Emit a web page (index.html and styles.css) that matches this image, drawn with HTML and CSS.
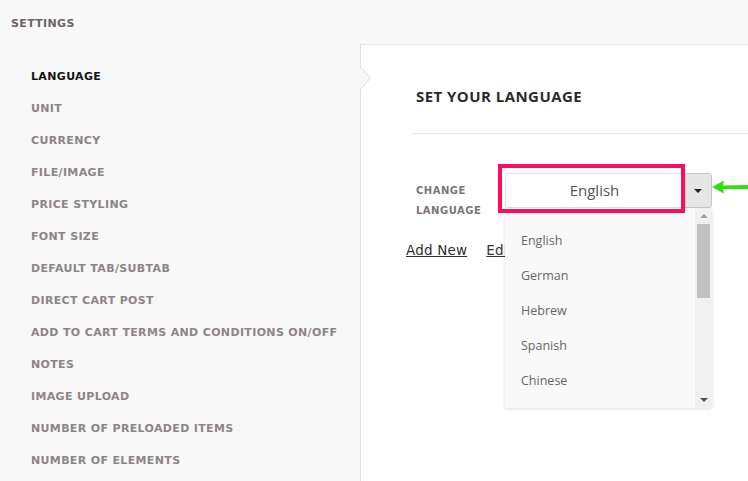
FILE: index.html
```html
<!DOCTYPE html>
<html>
<head>
<meta charset="utf-8">
<link rel="stylesheet" href="styles.css">
</head>
<body>
<div class="page">
  <header class="top"><span class="top-title">SETTINGS</span></header>
  <div class="main">
    <nav class="sidebar">
      <a class="nav-item active">LANGUAGE</a>
      <a class="nav-item">UNIT</a>
      <a class="nav-item">CURRENCY</a>
      <a class="nav-item">FILE/IMAGE</a>
      <a class="nav-item">PRICE STYLING</a>
      <a class="nav-item">FONT SIZE</a>
      <a class="nav-item">DEFAULT TAB/SUBTAB</a>
      <a class="nav-item">DIRECT CART POST</a>
      <a class="nav-item">ADD TO CART TERMS AND CONDITIONS ON/OFF</a>
      <a class="nav-item">NOTES</a>
      <a class="nav-item">IMAGE UPLOAD</a>
      <a class="nav-item">NUMBER OF PRELOADED ITEMS</a>
      <a class="nav-item">NUMBER OF ELEMENTS</a>
    </nav>
    <section class="panel">
      <svg class="notch" width="12" height="24" viewBox="0 0 12 24"><polygon points="0,0 10.5,11 0,22" fill="#f8f8f8"/><polyline points="0.5,0 10.5,11 0.5,22" fill="none" stroke="#dcdcdc" stroke-width="1"/></svg>
      <h2 class="panel-title">SET YOUR LANGUAGE</h2>
      <div class="divider"></div>
      <div class="form-row">
        <label class="field-label">CHANGE<br>LANGUAGE</label>
        <div class="select-wrap">
          <div class="select">
            <div class="select-value">English</div>
            <div class="select-btn"><span class="caret"></span></div>
          </div>
          <svg class="green-arrow" width="40" height="16" viewBox="0 0 40 16"><polygon points="0,7 12,0.5 11,5.5 40,5 40,9 11,9 12,13.5" fill="#2de10f"/></svg>
          <div class="dropdown">
            <ul class="options">
              <li>English</li>
              <li>German</li>
              <li>Hebrew</li>
              <li>Spanish</li>
              <li>Chinese</li>
            </ul>
            <div class="scrollbar">
              <span class="sb-up"></span>
              <span class="sb-thumb"></span>
              <span class="sb-down"></span>
            </div>
          </div>
          <div class="highlight"></div>
        </div>
      </div>
      <div class="links">
        <a class="link">Add New</a>
        <a class="link">Edit</a>
      </div>
    </section>
  </div>
</div>
</body>
</html>
```

FILE: styles.css
```css
* { box-sizing: border-box; }
html, body { margin: 0; padding: 0; }
body {
  width: 748px;
  height: 481px;
  overflow: hidden;
  background: #f8f8f8;
  font-family: "DejaVu Sans", sans-serif;
}
.page { display: flex; flex-direction: column; height: 481px; }
.top {
  height: 44px;
  padding: 12px 0 0 11px;
}
.top-title {
  font-size: 11px;
  font-weight: bold;
  color: #6b6466;
  letter-spacing: 0.35px;
}
.main { display: flex; flex: 1; }
.sidebar {
  width: 360px;
  padding: 17px 0 0 31px;
  display: flex;
  flex-direction: column;
}
.nav-item {
  height: 32px;
  line-height: 32px;
  font-size: 11px;
  font-weight: bold;
  color: #8c8587;
  letter-spacing: 0.35px;
  white-space: nowrap;
}
.nav-item.active { color: #141414; }
.panel {
  flex: 1;
  position: relative;
  background: #fff;
  border-left: 1px solid #dedede;
  border-top: 1px solid #e3e3e3;
  padding: 0 0 0 51px;
}
.notch {
  position: absolute;
  left: -1px;
  top: 22px;
}
.panel-title {
  margin: 0;
  padding: 43px 0 0 4px;
  height: 88px;
  font-family: "Open Sans", sans-serif;
  font-size: 15px;
  font-weight: bold;
  color: #2b2b2b;
  line-height: 16px;
  letter-spacing: 0.45px;
}
.divider {
  height: 1px;
  background: #e6e6e6;
}
.form-row {
  display: flex;
  padding: 39px 0 0 4px;
}
.field-label {
  width: 89px;
  padding-top: 8px;
  font-size: 10px;
  font-weight: bold;
  color: #7a7577;
  line-height: 20px;
  letter-spacing: 0.5px;
}
.select-wrap { position: relative; }
.select {
  display: flex;
  width: 207px;
  height: 35px;
}
.select-value {
  flex: 1;
  border: 1px solid #e2e2e2;
  border-radius: 3px 0 0 3px;
  background: #fff;
  text-align: center;
  font-family: "Open Sans", sans-serif;
  font-size: 15px;
  line-height: 33px;
  color: #555;
}
.select-btn {
  width: 28px;
  background: #e6e6e6;
  border: 1px solid #c9c9c9;
  border-radius: 0 3px 3px 0;
  display: flex;
  align-items: center;
  justify-content: center;
}
.caret {
  width: 0;
  height: 0;
  border-left: 4px solid transparent;
  border-right: 4px solid transparent;
  border-top: 4px solid #222;
  margin-top: 1px;
}
.highlight {
  position: absolute;
  left: -7px;
  top: -9px;
  width: 187px;
  height: 49px;
  border: 4px solid #fd0d5c;
}
.green-arrow {
  position: absolute;
  left: 207px;
  top: 7px;
}
.dropdown {
  position: absolute;
  left: 0;
  top: 35px;
  width: 207px;
  height: 200px;
  display: flex;
  background: #f9f9f9;
  box-shadow: 0 1px 4px rgba(0,0,0,0.12);
}
.options {
  list-style: none;
  margin: 0;
  padding: 15px 0 0 16px;
  flex: 1;
}
.options li {
  height: 35px;
  line-height: 35px;
  font-family: "Open Sans", sans-serif;
  font-size: 12.5px;
  color: #666;
}
.scrollbar {
  width: 17px;
  background: #f1f1f1;
  position: relative;
  display: flex;
  flex-direction: column;
  align-items: center;
}
.sb-up {
  margin-top: 6px;
  width: 0; height: 0;
  border-left: 4px solid transparent;
  border-right: 4px solid transparent;
  border-bottom: 4px solid #a3a3a3;
}
.sb-thumb {
  margin-top: 6px;
  width: 13px;
  height: 74px;
  background: #c1c1c1;
}
.sb-down {
  margin-top: auto;
  margin-bottom: 6px;
  width: 0; height: 0;
  border-left: 4px solid transparent;
  border-right: 4px solid transparent;
  border-top: 4px solid #505050;
}
.links {
  display: flex;
  gap: 15px;
  padding: 21px 0 0 0;
  margin-left: -6px;
}
.link {
  font-size: 13.5px;
  color: #2e2e2e;
  text-decoration: underline;
  letter-spacing: 0.2px;
}
.link:first-child { padding-right: 4px; }
.link + .link { color: #2e3540; }
```
